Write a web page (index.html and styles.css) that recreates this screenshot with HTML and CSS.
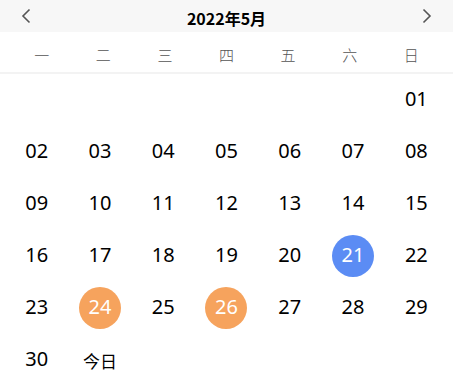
FILE: index.html
```html
<!DOCTYPE html>
<html lang="zh-CN">
<head>
    <meta charset="UTF-8">
    <meta name="viewport" content="width=device-width, initial-scale=1.0">
    <link rel="stylesheet" href="styles.css">
    <title>日历</title>
</head>
<body>
    <div class="calendar">
        <div class="cal-header">
            <button class="nav-btn" type="button" aria-label="上个月">
                <svg width="10" height="16" viewBox="0 0 10 16"><polyline points="8.5,1.5 2,8 8.5,14.5" fill="none" stroke="#555" stroke-width="1.6"/></svg>
            </button>
            <div class="cal-title">2022年5月</div>
            <button class="nav-btn" type="button" aria-label="下个月">
                <svg width="10" height="16" viewBox="0 0 10 16"><polyline points="1.5,1.5 8,8 1.5,14.5" fill="none" stroke="#555" stroke-width="1.6"/></svg>
            </button>
        </div>

        <div class="week-row">
            <span>一</span><span>二</span><span>三</span><span>四</span><span>五</span><span>六</span><span>日</span>
        </div>

        <div class="days" id="days"></div>
    </div>

    <script>
        // May 2022 starts on a Sunday
        const offset = 6;
        const total = 31;
        const today = 31;
        const selected = [21];
        const marked = [24, 26];

        const daysEl = document.getElementById('days');

        for (let i = 0; i < offset; i++) {
            daysEl.appendChild(document.createElement('div'));
        }

        for (let d = 1; d <= total; d++) {
            const cell = document.createElement('div');
            cell.classList.add('day');
            const num = document.createElement('span');
            num.classList.add('num');
            if (d === today) {
                num.textContent = '今日';
                num.classList.add('today');
            } else {
                num.textContent = String(d).padStart(2, '0');
            }
            if (selected.includes(d)) num.classList.add('selected');
            if (marked.includes(d)) num.classList.add('marked');
            cell.appendChild(num);
            daysEl.appendChild(cell);
        }
    </script>
</body>
</html>
```

FILE: styles.css
```css
body {
    margin: 0;
    padding: 0;
    background-color: #fff;
    font-family: "Noto Sans", "Noto Sans CJK SC", sans-serif;
    color: #000;
}

.calendar {
    width: 453px;
}

.cal-header {
    height: 32px;
    background-color: #f7f7f7;
    display: flex;
    align-items: center;
    justify-content: space-between;
    padding: 0 16px 0 16px;
}

.nav-btn {
    background: none;
    border: none;
    padding: 0;
    width: 20px;
    height: 20px;
    display: flex;
    align-items: center;
    justify-content: center;
    cursor: pointer;
}

.cal-title {
    font-family: "Noto Sans CJK SC", sans-serif;
    font-weight: bold;
    font-size: 16px;
    color: #000;
    padding-top: 3px;
}

.week-row {
    display: grid;
    grid-template-columns: repeat(7, 1fr);
    padding: 0 11px;
    height: 40px;
    align-items: center;
    border-bottom: 2px solid #f3f3f3;
}

.week-row span {
    text-align: center;
    font-family: "Noto Sans CJK SC", sans-serif;
    font-size: 15px;
    font-weight: 300;
    color: #555;
    padding-top: 4px;
}

.days {
    display: grid;
    grid-template-columns: repeat(7, 1fr);
    grid-auto-rows: 52px;
    padding: 0 5px;
}

.day {
    display: flex;
    align-items: center;
    justify-content: center;
}

.num {
    width: 42px;
    height: 42px;
    border-radius: 50%;
    display: flex;
    align-items: center;
    justify-content: center;
    font-size: 20px;
    line-height: 1;
    padding-bottom: 2px;
    box-sizing: border-box;
}

.num.today {
    font-family: "Noto Sans CJK SC", sans-serif;
    font-size: 17px;
    padding-top: 2px;
}

.num.selected {
    background-color: #5b8cf4;
    color: #fff;
}

.num.marked {
    background-color: #f6a35d;
    color: #fff;
}
```
